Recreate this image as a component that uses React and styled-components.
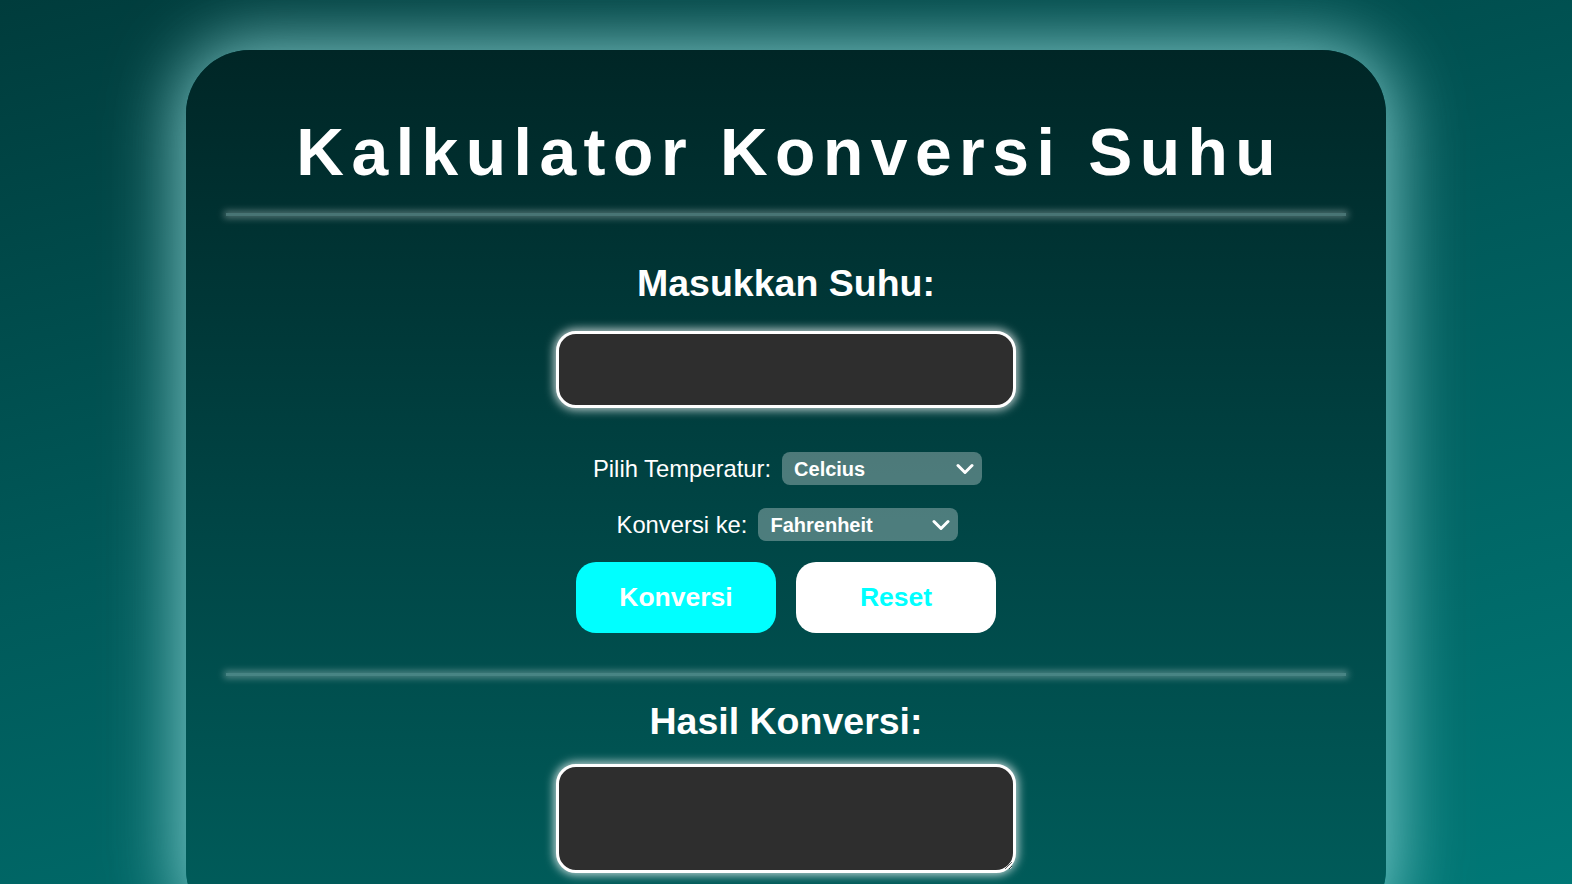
import React, { useState } from "react";
import styled, { createGlobalStyle } from "styled-components";

const GlobalStyle = createGlobalStyle`
  html, body {
    margin: 0;
    padding: 0;
  }
  body {
    min-height: 100vh;
    overflow: hidden;
    font-family: "Liberation Sans", Arial, sans-serif;
    background: linear-gradient(165deg, #003c3c 0%, #005a5a 45%, #007a78 100%);
  }
`;

const Page = styled.div`
  display: flex;
  justify-content: center;
  padding-top: 50px;
`;

const Card = styled.div`
  width: 1200px;
  box-sizing: border-box;
  padding: 64px 40px 60px;
  border-radius: 64px;
  background: linear-gradient(to bottom, #002626 0%, #004646 55%, #005e5c 100%);
  box-shadow: 0 0 70px 6px rgba(150, 225, 225, 0.85);
  display: flex;
  flex-direction: column;
  align-items: center;
  color: #fff;
`;

const Title = styled.h1`
  margin: 0;
  padding-left: 7.5px;
  font-size: 66px;
  font-weight: 700;
  letter-spacing: 7.5px;
  line-height: normal;
  text-align: center;
`;

const Divider = styled.hr`
  align-self: stretch;
  height: 3px;
  border: none;
  margin: ${props => props.$margin};
  background: rgba(160, 200, 200, 0.45);
  box-shadow: 0 0 7px 2px rgba(255, 255, 255, 0.35);
`;

const SectionTitle = styled.h2`
  margin: 0;
  font-size: 37.5px;
  font-weight: 700;
  line-height: normal;
`;

const ValueInput = styled.input`
  width: 460px;
  height: 77px;
  box-sizing: border-box;
  margin-top: 26px;
  border: 3px solid #fff;
  border-radius: 20px;
  background: #2e2e2e;
  box-shadow: 0 0 10px 2px rgba(255, 255, 255, 0.75);
  color: #fff;
  font-size: 26px;
  padding: 0 18px;
  outline: none;
  font-family: inherit;
`;

const ResultBox = styled.textarea`
  width: 460px;
  height: 109px;
  box-sizing: border-box;
  margin-top: 21px;
  border: 3px solid #fff;
  border-radius: 20px;
  background: #2e2e2e;
  box-shadow: 0 0 10px 2px rgba(255, 255, 255, 0.75);
  color: #fff;
  font-size: 24px;
  padding: 14px 18px;
  outline: none;
  font-family: inherit;
`;

const Row = styled.div`
  display: flex;
  align-items: center;
  gap: 11px;
  padding-left: 3px;
  margin-top: ${props => props.$top};
`;

const Label = styled.label`
  font-size: 23.8px;
  color: #fff;
`;

const SelectWrap = styled.div`
  position: relative;
  width: 200px;
  height: 33px;
`;

const Select = styled.select`
  appearance: none;
  width: 100%;
  height: 100%;
  border: none;
  border-radius: 8px;
  background: rgba(255, 255, 255, 0.3);
  color: #fff;
  font-family: inherit;
  font-size: 20px;
  font-weight: 700;
  padding: 0 12px;
  outline: none;
  cursor: pointer;

  option {
    color: #000;
  }
`;

const Chevron = styled.svg`
  position: absolute;
  right: 8px;
  top: 50%;
  transform: translateY(-50%);
  pointer-events: none;
`;

const Buttons = styled.div`
  display: flex;
  gap: 20px;
  margin-top: 21px;
`;

const Button = styled.button`
  width: 200px;
  height: 71px;
  border: none;
  border-radius: 20px;
  font-family: inherit;
  font-size: 26.5px;
  font-weight: 700;
  cursor: pointer;
  background: ${props => (props.$primary ? "#00ffff" : "#ffffff")};
  color: ${props => (props.$primary ? "#ffffff" : "#00ffff")};
`;

const units = ["Celcius", "Fahrenheit", "Kelvin", "Reamur"];

const convert = (v, from, to) => {
  let c = v;
  if (from === "Fahrenheit") c = ((v - 32) * 5) / 9;
  if (from === "Kelvin") c = v - 273.15;
  if (from === "Reamur") c = (v * 5) / 4;
  if (to === "Fahrenheit") return (c * 9) / 5 + 32;
  if (to === "Kelvin") return c + 273.15;
  if (to === "Reamur") return (c * 4) / 5;
  return c;
};

const Dropdown = ({ value, onChange }) => (
  <SelectWrap>
    <Select value={value} onChange={e => onChange(e.target.value)}>
      {units.map(u => (
        <option key={u} value={u}>
          {u}
        </option>
      ))}
    </Select>
    <Chevron width="18" height="11" viewBox="0 0 18 11">
      <path
        d="M2 2 L9 9 L16 2"
        fill="none"
        stroke="#fff"
        strokeWidth="3"
        strokeLinecap="round"
        strokeLinejoin="round"
      />
    </Chevron>
  </SelectWrap>
);

const App = () => {
  const [value, setValue] = useState("");
  const [from, setFrom] = useState("Celcius");
  const [to, setTo] = useState("Fahrenheit");
  const [result, setResult] = useState("");

  const handleConvert = () => {
    const n = parseFloat(value);
    if (isNaN(n)) return setResult("");
    setResult(`${convert(n, from, to).toFixed(2)} ${to}`);
  };

  const handleReset = () => {
    setValue("");
    setResult("");
  };

  return (
    <>
      <GlobalStyle />
      <Page>
        <Card>
          <Title>Kalkulator Konversi Suhu</Title>
          <Divider $margin="23px 0 46px" />
          <SectionTitle>Masukkan Suhu:</SectionTitle>
          <ValueInput
            type="number"
            value={value}
            onChange={e => setValue(e.target.value)}
          />
          <Row $top="44px">
            <Label>Pilih Temperatur:</Label>
            <Dropdown value={from} onChange={setFrom} />
          </Row>
          <Row $top="23px">
            <Label>Konversi ke:</Label>
            <Dropdown value={to} onChange={setTo} />
          </Row>
          <Buttons>
            <Button $primary onClick={handleConvert}>
              Konversi
            </Button>
            <Button onClick={handleReset}>Reset</Button>
          </Buttons>
          <Divider $margin="40px 0 24px" />
          <SectionTitle>Hasil Konversi:</SectionTitle>
          <ResultBox readOnly value={result} />
        </Card>
      </Page>
    </>
  );
};

export default App;
